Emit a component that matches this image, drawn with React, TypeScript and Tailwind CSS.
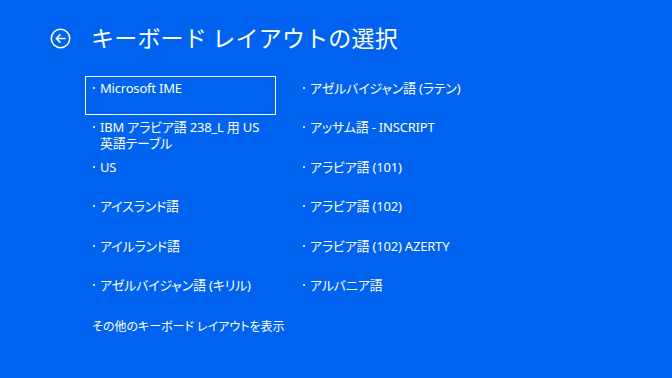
import React from 'react';

const left = [
  ['Microsoft IME'],
  ['IBM アラビア語 238_L 用 US', '英語テーブル'],
  ['US'],
  ['アイスランド語'],
  ['アイルランド語'],
  ['アゼルバイジャン語 (キリル)'],
];

const right = [
  ['アゼルバイジャン語 (ラテン)'],
  ['アッサム語 - INSCRIPT'],
  ['アラビア語 (101)'],
  ['アラビア語 (102)'],
  ['アラビア語 (102) AZERTY'],
  ['アルバニア語'],
];

function Item({ lines, selected }: { lines: string[]; selected?: boolean }) {
  return (
    <div
      className={
        'h-[39.4px] w-[191px] pl-[8px] pt-[4px] ' +
        (selected ? 'outline outline-[1.5px] outline-white -outline-offset-1' : '')
      }
    >
      <div className="flex items-start">
        <span className="mt-[7px] mr-[5px] h-[2px] w-[2px] shrink-0 bg-white/80" />
        <div className="text-[13px] leading-[16px] tracking-[-0.2px] [font-feature-settings:'palt']">
          {lines.map((l) => (
            <div key={l}>{l}</div>
          ))}
        </div>
      </div>
    </div>
  );
}

export default function App() {
  return (
    <div
      className="h-[378px] w-[672px] overflow-hidden bg-[#0063f0] text-white"
      style={{ fontFamily: '"Noto Sans", "Noto Sans CJK JP", sans-serif' }}
    >
      {/* ヘッダー */}
      <div className="flex items-center pl-[50px] pt-[26px]">
        <svg width="21" height="21" viewBox="0 0 21 21" fill="none" stroke="white" strokeWidth="1.6">
          <circle cx="10.5" cy="10.5" r="9.2" />
          <path d="M15 10.5H6.5M10 6.8l-3.7 3.7 3.7 3.7" strokeLinecap="round" strokeLinejoin="round" />
        </svg>
        <h1 className="ml-[20px] -mt-[2px] text-[23px] leading-[26px] tracking-[0.2px]" style={{ fontFamily: '"Noto Sans CJK JP", sans-serif' }}>
          キーボード レイアウトの選択
        </h1>
      </div>

      {/* 一覧 */}
      <div className="ml-[85px] mt-[26px] flex">
        <div className="w-[210px]">
          {left.map((lines, i) => (
            <Item key={i} lines={lines} selected={i === 0} />
          ))}
        </div>
        <div className="w-[210px]">
          {right.map((lines, i) => (
            <Item key={i} lines={lines} />
          ))}
        </div>
      </div>

      <div className="ml-[92px] mt-[7px] text-[12px] leading-[16px] [font-feature-settings:'palt']">
        その他のキーボード レイアウトを表示
      </div>
    </div>
  );
}
